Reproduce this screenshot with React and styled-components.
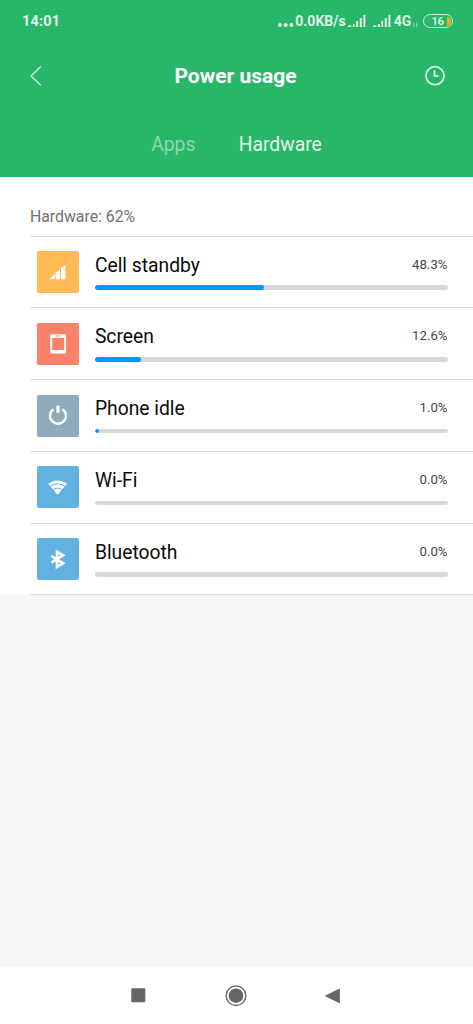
import React from 'react';
import styled, { createGlobalStyle } from 'styled-components';

const GlobalStyle = createGlobalStyle`
  * { box-sizing: border-box; }
  body { margin: 0; background: #f7f7f7; font-family: Roboto, "Liberation Sans", sans-serif; }
  svg { display: block; flex: none; }
`;

const Screen = styled.div`
  display: flex;
  flex-direction: column;
  width: 473px;
  height: 1024px;
  background: #f7f7f7;
  overflow: hidden;
`;

const Header = styled.header`
  height: 177px;
  flex: none;
  background: #28b768;
  color: #fff;
`;

const StatusBar = styled.div`
  display: flex;
  align-items: center;
  height: 42px;
  padding: 0 20px 0 22px;
  color: #dff5e8;
  font-weight: 700;
`;

const Clock = styled.span`
  font-size: 14.5px;
  letter-spacing: 0.2px;
  margin-right: auto;
`;

const NetSpeed = styled.span`
  font-size: 14px;
  margin: 0 2.6px 0 1px;
`;

const NetType = styled.span`
  font-size: 14px;
  margin-left: 1.6px;
`;

const Battery = styled.div`
  display: flex;
  align-items: center;
  justify-content: flex-end;
  width: 30px;
  height: 13.6px;
  margin-left: 4.6px;
  padding-right: 1.2px;
  gap: 3.4px;
  border: 1.4px solid #c9eed8;
  border-radius: 7px;
  font-size: 11.4px;
  font-weight: 600;
  letter-spacing: -0.6px;
`;

const TitleBar = styled.div`
  display: grid;
  grid-template-columns: 60px 1fr 60px;
  align-items: center;
  height: 68px;
  padding: 0 8px 0 6px;
`;

const Title = styled.h1`
  margin: 0;
  text-align: center;
  font-size: 21px;
  font-weight: 700;
  line-height: 24px;
`;

const IconButton = styled.button`
  display: flex;
  justify-content: center;
  border: 0;
  padding: 0;
  background: none;
`;

const Tabs = styled.nav`
  display: flex;
  justify-content: center;
  align-items: center;
  gap: 43.4px;
  height: 68px;
`;

const Tab = styled.span`
  font-size: 19.3px;
  color: ${(p) => (p.$active ? '#e2f6ea' : '#8dd8ae')};
`;

const Panel = styled.main`
  background: #fff;
  height: 418px;
`;

const Summary = styled.div`
  height: 58.5px;
  padding: 29px 0 0 30px;
  font-size: 15.8px;
  line-height: 22px;
  color: #707070;
`;

const List = styled.div`
  margin-left: 30px;
  border-top: 1px solid #dedede;
`;

const Row = styled.div`
  display: flex;
  height: 71.8px;
  padding: 14.6px 25.5px 0 6.7px;
  border-bottom: 1px solid #dcdcdc;
`;

const Tile = styled.div`
  display: flex;
  align-items: center;
  justify-content: center;
  width: 42.2px;
  height: 42px;
  border-radius: 2px;
  background: ${(p) => p.$color};
`;

const Detail = styled.div`
  flex: 1;
  margin-left: 16px;
`;

const Line = styled.div`
  display: flex;
  align-items: center;
  justify-content: space-between;
  height: 26px;
`;

const Name = styled.span`
  padding-top: 2px;
  font-size: 19.3px;
  color: #0a0a0a;
`;

const Percent = styled.span`
  font-size: 13.2px;
  color: #484848;
`;

const Track = styled.div`
  height: 4.6px;
  margin-top: 8.2px;
  border-radius: 2.3px;
  background: #d8d8d8;
  overflow: hidden;
`;

const Fill = styled.div`
  height: 100%;
  border-radius: 2.3px;
  background: #0398ff;
`;

const NavBar = styled.footer`
  display: flex;
  justify-content: space-between;
  align-items: center;
  height: 57px;
  margin-top: auto;
  padding: 0 133px 0 131px;
  background: #fff;
`;

const SignalBars = () => (
  <svg width="19" height="14" viewBox="0 0 19 14" fill="#dff5e8">
    <path d="M0 11.5h3.4V13H0zM4.8 10h2V13h-2zM8.2 7h2v6h-2zM11.8 4h2v9h-2zM15.4 1h2v12h-2z" />
  </svg>
);

const CellIcon = () => (
  <svg width="42" height="42" viewBox="0 0 42 42" fill="#fff">
    <path d="M13 28.3v-1l4.8-4.3v5.3zM18.7 28.3v-6.2l4.3-3.9v10.1zM24 28.3V17.3l4.4-3.5v14.5z" />
  </svg>
);

const PhoneIcon = () => (
  <svg width="42" height="42" viewBox="0 0 42 42">
    <path fill="#fff" fillRule="evenodd" d="M14.5 11.2h13.4a1.2 1.2 0 0 1 1.2 1.2v16.8a1.2 1.2 0 0 1-1.2 1.2H14.5a1.2 1.2 0 0 1-1.2-1.2V12.4a1.2 1.2 0 0 1 1.2-1.2zM15.2 15.1v12h12v-12zM19 12.4v1h4.4v-1z" />
  </svg>
);

const PowerIcon = () => (
  <svg width="42" height="42" viewBox="0 0 42 42" fill="none" stroke="#fff">
    <path strokeWidth="2.4" d="M16.4 14.2a8 8 0 1 0 9.2 0" />
    <path strokeWidth="3.2" d="M21 10.7v7" />
  </svg>
);

const WifiIcon = () => (
  <svg width="42" height="42" viewBox="0 0 42 42">
    <path fill="#fff" d="M11.2 17.8a14.8 14.8 0 0 1 18.8 0L20.6 28.8z" />
    <g fill="none" stroke="#61b2e0" strokeWidth="1">
      <path d="M12.2 21.2a12.2 12.2 0 0 1 16.8 0" />
      <path d="M15 24.4a8 8 0 0 1 11.2 0" />
    </g>
  </svg>
);

const BluetoothIcon = () => (
  <svg width="42" height="42" viewBox="0 0 42 42" fill="none" stroke="#fff" strokeWidth="2.6">
    <path d="M14.4 18l11.7 7.3-6.1 3.6V13.7l6.1 3.6-11.7 7.3" />
  </svg>
);

const rows = [
  { name: 'Cell standby', value: 48.3, bar: 48.1, color: '#ffba54', Icon: CellIcon },
  { name: 'Screen', value: 12.6, bar: 13.1, color: '#fa8268', Icon: PhoneIcon },
  { name: 'Phone idle', value: 1.0, color: '#8eaabd', Icon: PowerIcon },
  { name: 'Wi-Fi', value: 0, color: '#61b2e0', Icon: WifiIcon },
  { name: 'Bluetooth', value: 0, color: '#61b2e0', Icon: BluetoothIcon },
];

export default function App() {
  return (
    <Screen>
      <GlobalStyle />
      <Header>
        <StatusBar>
          <Clock>14:01</Clock>
          <svg width="17" height="14" viewBox="0 0 17 14" fill="#dff5e8">
            <circle cx="3" cy="11" r="2" />
            <circle cx="8.7" cy="11" r="2" />
            <circle cx="14.4" cy="11" r="2" />
          </svg>
          <NetSpeed>0.0KB/s</NetSpeed>
          <SignalBars />
          <svg width="6" height="14" />
          <SignalBars />
          <NetType>4G</NetType>
          <svg width="7" height="14" viewBox="0 0 7 14" fill="#7fd3a4">
            <path d="M2 8.5h1.2V13H2zM5 8.5h1.2V13H5z" />
          </svg>
          <Battery>
            <span>16</span>
            <svg width="4" height="9" viewBox="0 0 4 9">
              <path d="M0 0c2.6 0 4 1.8 4 4.5S2.6 9 0 9z" fill="#f5a623" />
            </svg>
          </Battery>
        </StatusBar>
        <TitleBar>
          <IconButton aria-label="Back">
            <svg width="24" height="24" viewBox="0 0 24 24" fill="none" stroke="#d5f2e1" strokeWidth="1.3">
              <path d="M16.8 2.5L7 12l9.8 9.2" />
            </svg>
          </IconButton>
          <Title>Power usage</Title>
          <IconButton aria-label="History">
            <svg width="24" height="24" viewBox="0 0 24 24" fill="none" stroke="#e6f8ee" strokeWidth="1.7">
              <circle cx="12" cy="11.7" r="9" />
              <path d="M11.5 6.2v5.8h4.2" />
            </svg>
          </IconButton>
        </TitleBar>
        <Tabs>
          <Tab>Apps</Tab>
          <Tab $active>Hardware</Tab>
        </Tabs>
      </Header>
      <Panel>
        <Summary>Hardware: 62%</Summary>
        <List>
          {rows.map(({ name, value, bar = value, color, Icon }) => (
            <Row key={name}>
              <Tile $color={color}><Icon /></Tile>
              <Detail>
                <Line>
                  <Name>{name}</Name>
                  <Percent>{value.toFixed(1)}%</Percent>
                </Line>
                <Track>
                  {bar > 0 && <Fill style={{ width: `max(4.6px, ${bar}%)` }} />}
                </Track>
              </Detail>
            </Row>
          ))}
        </List>
      </Panel>
      <NavBar>
        <svg width="15" height="15"><rect x="0.3" y="0.3" width="14" height="14" rx="0.8" fill="#666" /></svg>
        <svg width="22" height="22" viewBox="0 0 22 22">
          <circle cx="11" cy="10.7" r="9.8" fill="none" stroke="#666" strokeWidth="1.4" />
          <circle cx="11" cy="10.7" r="7.3" fill="#666" />
        </svg>
        <svg width="15" height="16" viewBox="0 0 15 16"><path d="M14.6.8v14.2L.3 7.9z" fill="#666" stroke="#666" strokeWidth=".6" strokeLinejoin="round" /></svg>
      </NavBar>
    </Screen>
  );
}
